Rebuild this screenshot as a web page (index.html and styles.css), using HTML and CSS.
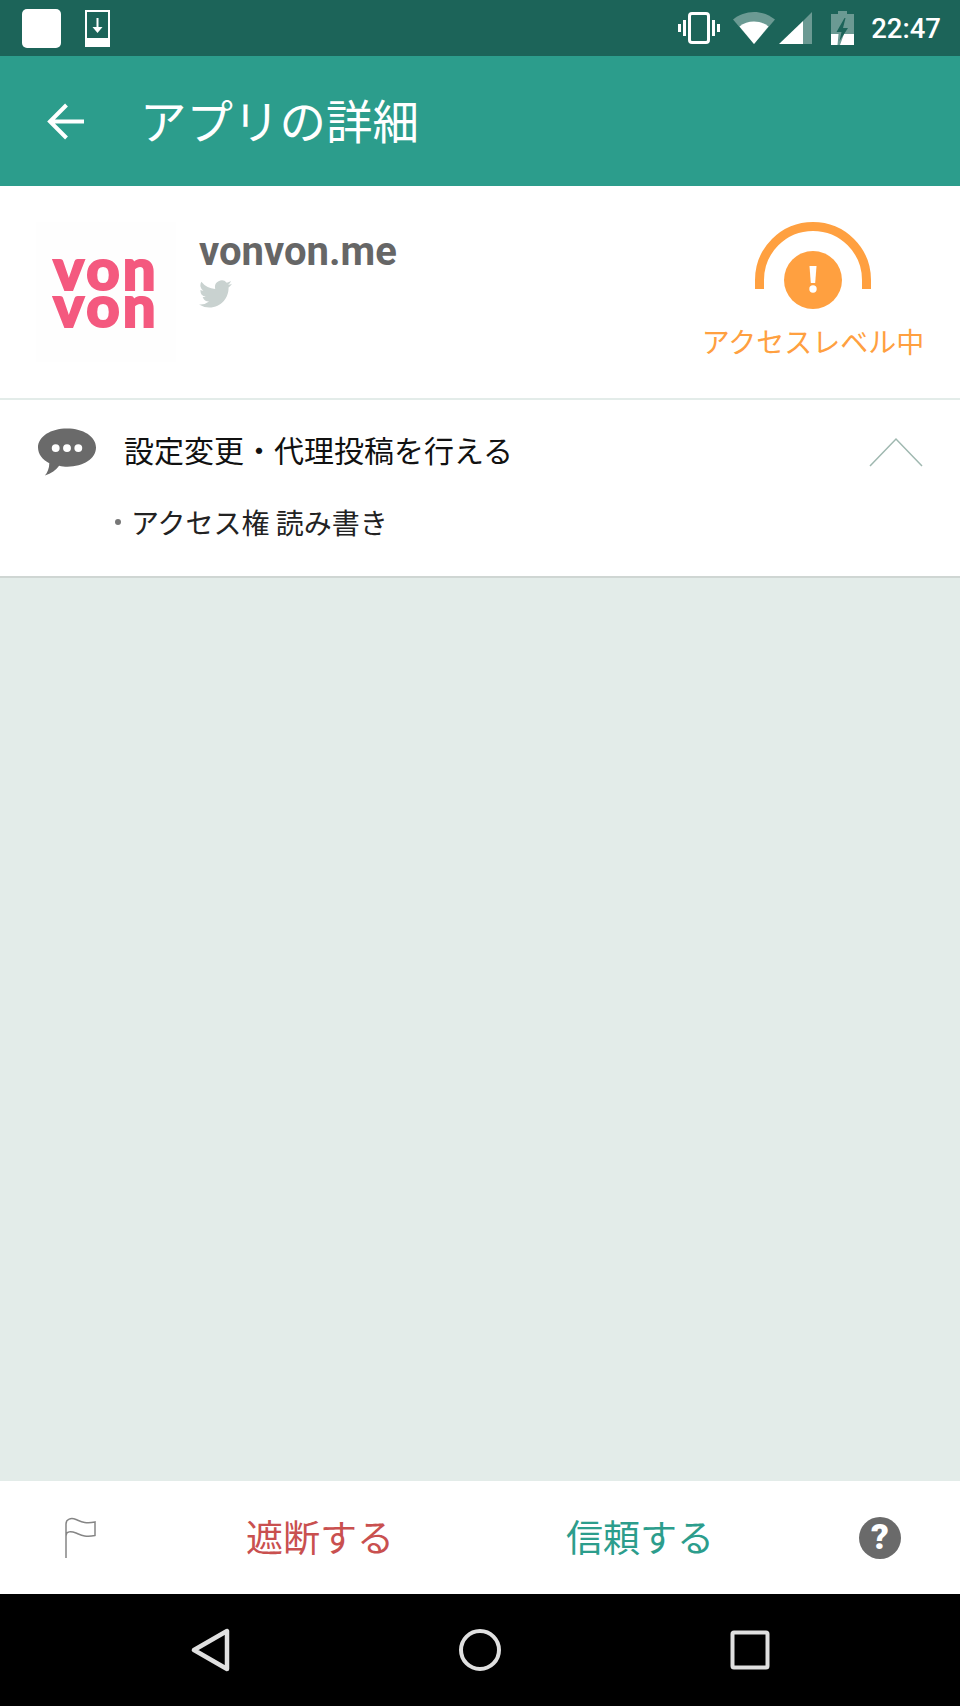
FILE: index.html
```html
<!DOCTYPE html>
<html lang="ja">
<head>
    <meta charset="UTF-8">
    <meta name="viewport" content="width=device-width, initial-scale=1.0">
    <title>アプリの詳細</title>
    <link rel="stylesheet" href="styles.css">
</head>
<body>
    <div class="status-bar">
        <div class="status-left">
            <div class="notif-square"></div>
            <svg class="notif-download" viewBox="0 0 25 37">
                <path fill="#fff" fill-rule="evenodd" d="M0 0h25v37H0zM2 2v26h21V2z"/>
                <path fill="none" stroke="#fff" stroke-width="2" d="M12.500 8v12"/>
                <path fill="#fff" d="M7.500 17h10l-5 6z"/>
            </svg>
        </div>
        <div class="status-right">
            <svg class="st-vibrate" viewBox="0 0 42 32">
                <rect x="11.500" y="1.500" width="19" height="29" rx="2.500" fill="none" stroke="#fff" stroke-width="3"/>
                <path fill="#fff" d="M5 8h3v16H5zM34 8h3v16h-3zM0 12h3v8H0zM39 12h3v8h-3z"/>
            </svg>
            <svg class="st-wifi" viewBox="0 0 42 32">
                <path fill="#fff" fill-opacity=".35" d="M21 32L0 7.500C6 2.800 13 0 21 0s15 2.800 21 7.500z"/>
                <path fill="#fff" d="M21 32L6.500 14.500C10.500 11.300 15.500 9.500 21 9.500s10.500 1.800 14.500 5z"/>
            </svg>
            <svg class="st-signal" viewBox="0 0 33 32">
                <path fill="#fff" fill-opacity=".35" d="M33 0v32H24V9z"/>
                <path fill="#fff" d="M24 9v23H0z"/>
            </svg>
            <svg class="st-battery" viewBox="0 0 23 34">
                <path fill="#fff" fill-opacity=".35" d="M7 0h9v3h7v31H0V3h7z"/>
                <path fill="#fff" d="M0 23h7.500l-1 11H0zM13 23h10v11H9z"/>
                <path fill="#1c6459" d="M13.500 7L5.500 21h5l-2 9 8.500-13h-5l2.500-10z"/>
            </svg>
            <span class="clock">22:47</span>
        </div>
    </div>

    <header class="app-bar">
        <svg class="back-arrow" viewBox="0 0 37 37">
            <path fill="none" stroke="#fff" stroke-width="4" d="M37 18.500H4M19.500 2L3 18.500 19.500 35"/>
        </svg>
        <h1 class="app-title">アプリの詳細</h1>
    </header>

    <section class="app-info">
        <div class="app-logo">
            <div class="logo-word">von von</div>
        </div>
        <div class="app-name">
            <div class="name-text">vonvon.me</div>
            <svg class="twitter-icon" viewBox="0 0 24 20">
                <path fill="#c9d2d0" d="M24 2.500a9.800 9.800 0 0 1-2.800.8A5 5 0 0 0 23.300.6a9.700 9.700 0 0 1-3.100 1.200A4.900 4.900 0 0 0 11.800 6.300 13.900 13.900 0 0 1 1.700 1.100a4.900 4.900 0 0 0 1.500 6.600 4.900 4.900 0 0 1-2.200-.6v.1a4.900 4.900 0 0 0 3.900 4.800 5 5 0 0 1-2.200.1 4.900 4.900 0 0 0 4.600 3.400A9.900 9.900 0 0 1 0 17.600 14 14 0 0 0 7.500 19.800c9.100 0 14-7.500 14-14v-.6A10 10 0 0 0 24 2.500z"/>
            </svg>
        </div>
        <div class="access-level">
            <svg class="gauge" viewBox="0 0 116 88">
                <path fill="none" stroke="#ffa040" stroke-width="9" d="M4.500 67V58a53.500 53.500 0 0 1 107 0v9"/>
                <circle cx="58" cy="58" r="29" fill="#ffa040"/>
                <path fill="#fff" d="M54.500 44h7l-1.300 17h-4.400z"/>
                <circle cx="58" cy="67" r="3.700" fill="#fff"/>
            </svg>
            <div class="level-label">アクセスレベル中</div>
        </div>
    </section>

    <section class="permission">
        <div class="perm-head">
            <svg class="chat-icon" viewBox="0 0 59 48">
                <path fill="#6a6a6a" d="M29.500 0C46 0 59 8 59 19.500S46 39 30 39c-3 0-6-.3-8.500-1-3 4-8 8-14.500 10 2.500-3 4.500-7 4.500-12.500C4.500 32 0 26 0 19.500 0 8 13 0 29.500 0z"/>
                <circle cx="18" cy="20" r="4" fill="#fff"/>
                <circle cx="29.500" cy="20" r="4" fill="#fff"/>
                <circle cx="41" cy="20" r="4" fill="#fff"/>
            </svg>
            <div class="perm-title">設定変更・代理投稿を行える</div>
            <svg class="chevron" viewBox="0 0 54 30">
                <path fill="none" stroke="#9fb8b0" stroke-width="1.500" d="M1 29L27 2l26 27"/>
            </svg>
        </div>
        <div class="perm-detail"><span class="perm-dot"></span>アクセス権 読み書き</div>
    </section>

    <main class="empty-area"></main>

    <div class="action-bar">
        <div class="action-cell">
            <svg class="flag-icon" viewBox="0 0 31 41">
                <path fill="none" stroke="#858585" stroke-width="1.500" d="M1 41V7C1 2 6 .5 11 2.500s9 4.500 19 2.500v13.500c-10 2-14-.5-19-2.500S1 14 1 19"/>
            </svg>
        </div>
        <div class="action-cell action-block">遮断する</div>
        <div class="action-cell action-trust">信頼する</div>
        <div class="action-cell">
            <div class="help-icon">?</div>
        </div>
    </div>

    <nav class="nav-bar">
        <svg class="nav-icon" viewBox="0 0 44 44">
            <path fill="none" stroke="#e0e0e0" stroke-width="4.500" stroke-linejoin="round" d="M39 3v38L6 22z"/>
        </svg>
        <svg class="nav-icon" viewBox="0 0 44 44">
            <circle cx="22" cy="22" r="19" fill="none" stroke="#e0e0e0" stroke-width="4"/>
        </svg>
        <svg class="nav-icon" viewBox="0 0 44 44">
            <rect x="4.500" y="4.500" width="35" height="35" rx="1.500" fill="none" stroke="#e0e0e0" stroke-width="4"/>
        </svg>
    </nav>
</body>
</html>
```

FILE: styles.css
```css
* {
    box-sizing: border-box;
}
html, body {
    margin: 0;
    padding: 0;
}
body {
    width: 960px;
    height: 1706px;
    display: flex;
    flex-direction: column;
    font-family: "Noto Sans CJK JP", Roboto, sans-serif;
    background: #e3ece9;
    overflow: hidden;
}
svg {
    display: block;
    flex-shrink: 0;
}

/* status bar */
.status-bar {
    height: 56px;
    flex-shrink: 0;
    background: #1c6459;
    display: flex;
    align-items: center;
    justify-content: space-between;
    padding: 0 19px 0 22px;
}
.status-left {
    display: flex;
    align-items: center;
    gap: 24px;
}
.notif-square {
    width: 39px;
    height: 39px;
    background: #fff;
    border-radius: 5px;
}
.notif-download {
    width: 25px;
    height: 37px;
}
.status-right {
    display: flex;
    align-items: center;
}
.st-vibrate {
    width: 42px;
    height: 32px;
    margin-right: 13px;
}
.st-wifi {
    width: 42px;
    height: 32px;
    margin-right: 4px;
}
.st-signal {
    width: 33px;
    height: 32px;
    margin-right: 19px;
}
.st-battery {
    width: 23px;
    height: 34px;
    margin-right: 17px;
}
.clock {
    font-family: Roboto, sans-serif;
    font-weight: 500;
    font-size: 27.500px;
    color: #fff;
}

/* app bar */
.app-bar {
    height: 130px;
    flex-shrink: 0;
    background: #2c9d8c;
    display: flex;
    align-items: center;
    padding: 0 0 0 47px;
}
.back-arrow {
    width: 37px;
    height: 37px;
    margin-right: 56px;
}
.app-title {
    margin: -4px 0 0;
    font-size: 46.500px;
    font-weight: 400;
    color: #fff;
    line-height: 1;
}

/* app info */
.app-info {
    height: 212px;
    flex-shrink: 0;
    background: #fff;
    display: flex;
    align-items: flex-start;
    padding: 36px 38px 0 36px;
}
.app-logo {
    width: 140px;
    height: 140px;
    background: #fefefe;
    padding-top: 27px;
    margin-right: 23px;
}
.logo-word {
    font-family: Lato, sans-serif;
    font-weight: 900;
    font-size: 58px;
    line-height: 37px;
    letter-spacing: 3px;
    text-align: center;
    color: #f4597f;
    -webkit-text-stroke: 2px #f4597f;
    filter: blur(.6px);
}
.app-name {
    flex: 1;
    padding-top: 9px;
}
.name-text {
    font-family: Roboto, sans-serif;
    font-weight: 700;
    font-size: 40px;
    line-height: 42px;
    color: #666;
}
.twitter-icon {
    width: 33px;
    height: 28px;
    margin-top: 7px;
}
.access-level {
    width: 218px;
    display: flex;
    flex-direction: column;
    align-items: center;
}
.gauge {
    width: 116px;
    height: 88px;
}
.level-label {
    font-size: 28px;
    line-height: 40px;
    color: #ffa040;
    margin-top: 11px;
    white-space: nowrap;
}

/* permission card */
.permission {
    height: 178px;
    flex-shrink: 0;
    background: #fff;
    margin-top: 2px;
    border-bottom: 2px solid #cfd6d3;
    padding: 28px 37px 0 38px;
}
.perm-head {
    display: flex;
    align-items: center;
    height: 48px;
}
.chat-icon {
    width: 58px;
    height: 48px;
    margin-right: 28px;
}
.perm-title {
    flex: 1;
    font-size: 30px;
    line-height: 40px;
    color: #111;
    margin-top: -6px;
    white-space: nowrap;
}
.chevron {
    width: 54px;
    height: 30px;
}
.perm-detail {
    display: flex;
    align-items: center;
    margin: 26px 0 0 77px;
    font-size: 28px;
    line-height: 40px;
    color: #222;
}
.perm-dot {
    width: 6px;
    height: 6px;
    border-radius: 50%;
    background: #777;
    margin-right: 10px;
}

.empty-area {
    flex: 1;
}

/* bottom actions */
.action-bar {
    height: 113px;
    flex-shrink: 0;
    background: #fff;
    display: grid;
    grid-template-columns: 160px 1fr 1fr 160px;
    align-items: center;
}
.action-cell {
    display: flex;
    justify-content: center;
    font-size: 37px;
    line-height: 50px;
}
.action-block, .action-trust {
    margin-top: -4px;
}
.action-block {
    color: #c9504f;
}
.action-trust {
    color: #2c9d8c;
}
.flag-icon {
    width: 31px;
    height: 41px;
}
.help-icon {
    width: 42px;
    height: 42px;
    border-radius: 50%;
    background: #6a6a6a;
    color: #fff;
    font-family: Roboto, sans-serif;
    font-weight: 900;
    font-size: 35px;
    line-height: 42px;
    text-align: center;
}

/* nav bar */
.nav-bar {
    height: 112px;
    flex-shrink: 0;
    background: #000;
    display: grid;
    grid-template-columns: repeat(3, 270px);
    padding: 0 75px;
    align-items: center;
    justify-items: center;
}
.nav-icon {
    width: 44px;
    height: 44px;
}
```
